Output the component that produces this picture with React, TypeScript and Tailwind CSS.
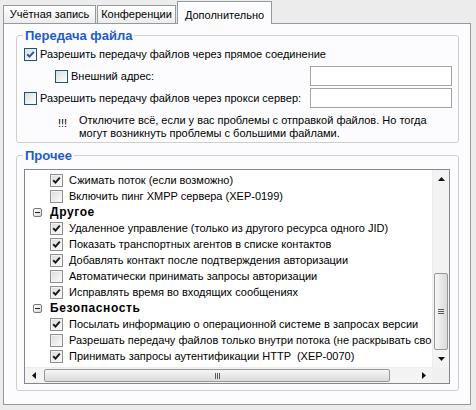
import React from "react";

type Item = { text: string; checked?: boolean; header?: boolean };

const items: Item[] = [
  { text: "Сжимать поток (если возможно)", checked: true },
  { text: "Включить пинг XMPP сервера (XEP-0199)" },
  { text: "Другое", header: true },
  { text: "Удаленное управление (только из другого ресурса одного JID)", checked: true },
  { text: "Показать транспортных агентов в списке контактов", checked: true },
  { text: "Добавлять контакт после подтверждения авторизации", checked: true },
  { text: "Автоматически принимать запросы авторизации" },
  { text: "Исправлять время во входящих сообщениях", checked: true },
  { text: "Безопасность", header: true },
  { text: "Посылать информацию о операционной системе в запросах версии", checked: true },
  { text: "Разрешать передачу файлов только внутри потока (не раскрывать свой IP)" },
  { text: "Принимать запросы аутентификации HTTP  (XEP-0070)", checked: true },
];

function XpCheck({ checked }: { checked?: boolean }) {
  return (
    <span className="w-[13px] h-[13px] shrink-0 border border-[#1c5180] bg-linear-to-br from-[#dcdcd7] to-white flex items-center justify-center">
      {checked && (
        <svg width="9" height="9" viewBox="0 0 9 9">
          <path d="M1.2 4.2 L3.5 6.6 L7.8 1.8" stroke="#2f55a4" strokeWidth="2" fill="none" />
        </svg>
      )}
    </span>
  );
}

function ListCheck({ checked }: { checked?: boolean }) {
  return (
    <span className="w-[13px] h-[13px] shrink-0 border border-[#8e8f8f] bg-[#f4f4f4] p-px flex">
      <span className="flex-1 bg-linear-to-br from-[#dcdcdc] to-[#fbfbfb] flex items-center justify-center">
        {checked && (
          <svg width="9" height="9" viewBox="0 0 9 9">
            <path d="M1.2 4.3 L3.5 6.6 L7.8 1.6" stroke="#1a1a1a" strokeWidth="2" fill="none" />
          </svg>
        )}
      </span>
    </span>
  );
}

function MinusBox() {
  return (
    <span className="w-[9px] h-[9px] shrink-0 border border-[#7a7a7a] rounded-[2px] bg-linear-to-br from-white to-[#d8d8d8] flex items-center justify-center">
      <span className="w-[5px] h-px bg-[#222]" />
    </span>
  );
}

function Arrow({ dir }: { dir: "up" | "down" | "left" | "right" }) {
  const d = {
    up: "M0 4 L3.5 0 L7 4 Z",
    down: "M0 0 L7 0 L3.5 4 Z",
    left: "M4 0 L4 7 L0 3.5 Z",
    right: "M0 0 L4 3.5 L0 7 Z",
  }[dir];
  const vertical = dir === "up" || dir === "down";
  return (
    <svg width={vertical ? 7 : 4} height={vertical ? 4 : 7} viewBox={vertical ? "0 0 7 4" : "0 0 4 7"}>
      <path d={d} fill="#111" />
    </svg>
  );
}

function Tab({ label, active, className }: { label: string; active?: boolean; className: string }) {
  if (active) {
    return (
      <div
        className={`relative z-10 h-[23px] -mb-px border border-b-0 border-[#919b9c] bg-[#fcfcfe] flex items-start justify-center pt-[5px] ${className}`}
      >
        {label}
      </div>
    );
  }
  return (
    <div
      className={`h-[18px] border border-b-0 border-[#919b9c] bg-linear-to-b from-white to-[#ececec] flex items-center justify-center ${className}`}
    >
      {label}
    </div>
  );
}

export default function App() {
  return (
    <div className="w-[476px] h-[410px] bg-[#ececec] pl-[3px] pt-px font-['Liberation_Sans',Arial,sans-serif] text-[11px] text-black overflow-hidden select-none whitespace-nowrap">
      <div className="flex items-end h-[22px]">
        <Tab label="Учётная запись" className="w-[93px]" />
        <Tab label="Конференции" className="w-[79px] ml-px" />
        <Tab label="Дополнительно" active className="w-[95px] ml-px" />
      </div>

      <div className="w-[468px] h-[382px] border border-[#919b9c] bg-[#fcfcfe] flex flex-col">
        {/* Передача файла */}
        <div className="mt-[11px] ml-[12px] w-[443px] h-[108px] shrink-0 border border-[#d0d0c8] rounded-[3px] flex flex-col">
          <div className="-mt-[8px] ml-[6px] px-[2px] w-fit h-[15px] leading-[15px] bg-[#fcfcfe] font-bold text-[13px] text-[#1e5bc6]">
            Передача файла
          </div>
          <div className="mt-[3px] h-[17px] pl-[7px] flex items-center gap-[3px]">
            <XpCheck checked />
            <span>Разрешить передачу файлов через прямое соединение</span>
          </div>
          <div className="mt-[3px] h-[20px] pl-[38px] flex items-center gap-[3px]">
            <XpCheck />
            <span>Внешний адрес:</span>
            <div className="ml-auto mr-[6px] w-[142px] h-[20px] border border-[#a5a5a5] bg-white" />
          </div>
          <div className="mt-[2px] h-[20px] pl-[7px] flex items-center gap-[3px]">
            <XpCheck />
            <span>Разрешить передачу файлов через прокси сервер:</span>
            <div className="ml-auto mr-[6px] w-[142px] h-[20px] border border-[#a5a5a5] bg-white" />
          </div>
          <div className="mt-[6px] pl-[41px] flex items-start leading-[13px]">
            <span className="w-[21px] pt-[3px]">!!!</span>
            <span>
              Отключите всё, если у вас проблемы с отправкой файлов. Но тогда
              <br />
              могут возникнуть проблемы с большими файлами.
            </span>
          </div>
        </div>

        {/* Прочее */}
        <div className="mt-[12px] ml-[12px] w-[443px] h-[236px] shrink-0 border border-[#d0d0c8] rounded-[3px] flex flex-col">
          <div className="-mt-[8px] ml-[6px] px-[2px] w-fit h-[15px] leading-[15px] bg-[#fcfcfe] font-bold text-[13px] text-[#1e5bc6]">
            Прочее
          </div>
          <div className="mt-[6px] ml-[7px] w-[426px] h-[215px] border border-[#828790] bg-white flex flex-col">
            <div className="h-[197px] flex">
              <div className="flex-1 overflow-hidden pt-[2px]">
                {items.map((it) =>
                  it.header ? (
                    <div key={it.text} className="h-[16px] pl-[8px] flex items-center gap-[8px] font-bold text-[12px] tracking-[0.6px]">
                      <MinusBox />
                      <span>{it.text}</span>
                    </div>
                  ) : (
                    <div key={it.text} className="h-[16px] pl-[25px] flex items-center gap-[6px] whitespace-pre">
                      <ListCheck checked={it.checked} />
                      <span>{it.text}</span>
                    </div>
                  )
                )}
              </div>
              {/* vertical scrollbar */}
              <div className="w-[17px] bg-[#f3f3f3] border-l border-[#ececec] flex flex-col">
                <div className="h-[17px] flex items-center justify-center">
                  <Arrow dir="up" />
                </div>
                <div className="flex-1 flex flex-col justify-end px-px">
                  <div className="h-[77px] rounded-[2px] border border-[#979797] bg-linear-to-r from-[#f6f6f6] to-[#dadada] flex flex-col items-center justify-center gap-px">
                    <span className="w-[6px] h-px bg-[#5a5a5a]" />
                    <span className="w-[6px] h-px bg-[#5a5a5a]" />
                    <span className="w-[6px] h-px bg-[#5a5a5a]" />
                  </div>
                </div>
                <div className="h-[17px] flex items-center justify-center">
                  <Arrow dir="down" />
                </div>
              </div>
            </div>
            {/* horizontal scrollbar */}
            <div className="h-[16px] flex">
              <div className="flex-1 bg-[#f3f3f3] border-t border-[#ececec] flex items-center">
                <div className="w-[17px] flex justify-center">
                  <Arrow dir="left" />
                </div>
                <div className="flex-1 py-px">
                  <div className="ml-[2px] w-[346px] h-[13px] rounded-[2px] border border-[#979797] bg-linear-to-b from-[#f6f6f6] to-[#dadada] flex items-center justify-center gap-px">
                    <span className="w-px h-[6px] bg-[#5a5a5a]" />
                    <span className="w-px h-[6px] bg-[#5a5a5a]" />
                    <span className="w-px h-[6px] bg-[#5a5a5a]" />
                  </div>
                </div>
                <div className="w-[17px] flex justify-center">
                  <Arrow dir="right" />
                </div>
              </div>
              <div className="w-[17px] bg-[#f0f0f0]" />
            </div>
          </div>
        </div>
      </div>
    </div>
  );
}
